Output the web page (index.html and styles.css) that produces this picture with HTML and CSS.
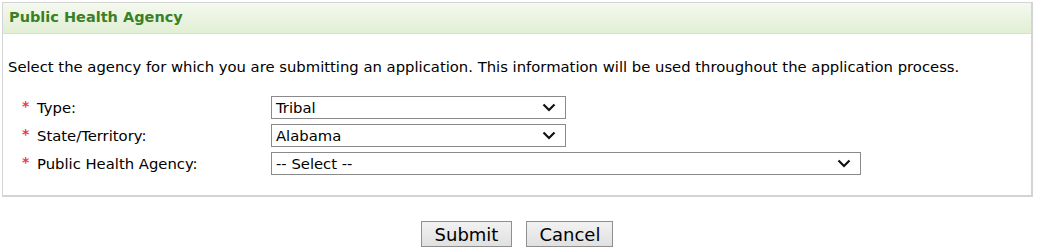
FILE: index.html
```html
<!DOCTYPE html>
<html>
<head>
<meta charset="utf-8">
<link rel="stylesheet" href="styles.css">
</head>
<body>
<div class="panel">
  <div class="panel-head">Public Health Agency</div>
  <div class="panel-body">
    <p class="intro">Select the agency for which you are submitting an application. This information will be used throughout the application process.</p>
    <div class="form">
      <div class="row">
        <label class="lbl"><span class="req">*</span>Type:</label>
        <div class="sel narrow"><span>Tribal</span><svg viewBox="0 0 14 9" width="14" height="9"><path d="M1.5 1.5 L7 7 L12.5 1.5" fill="none" stroke="#111" stroke-width="2.2"/></svg></div>
      </div>
      <div class="row">
        <label class="lbl"><span class="req">*</span>State/Territory:</label>
        <div class="sel narrow"><span>Alabama</span><svg viewBox="0 0 14 9" width="14" height="9"><path d="M1.5 1.5 L7 7 L12.5 1.5" fill="none" stroke="#111" stroke-width="2.2"/></svg></div>
      </div>
      <div class="row">
        <label class="lbl"><span class="req">*</span>Public Health Agency:</label>
        <div class="sel wide"><span>-- Select --</span><svg viewBox="0 0 14 9" width="14" height="9"><path d="M1.5 1.5 L7 7 L12.5 1.5" fill="none" stroke="#111" stroke-width="2.2"/></svg></div>
      </div>
    </div>
  </div>
</div>
<div class="actions">
  <button class="btn">Submit</button>
  <button class="btn">Cancel</button>
</div>
</body>
</html>
```
FILE: styles.css
```css
html, body { margin: 0; padding: 0; background: #fff; }
body { font-family: "DejaVu Sans", Verdana, sans-serif; color: #000; padding: 2px 0 0 2px; }
.panel { width: 1031px; border: 2px solid #d4d4d4; border-top-width: 1px; border-left-width: 1px; box-sizing: border-box; height: 195px; }
.panel-head { height: 31px; box-sizing: border-box; padding: 6px 6px 0 6px; font-size: 14.5px; font-weight: bold; color: #3a8026; background: linear-gradient(#f4f9ef, #e1efd4); border-bottom: 1px solid #d2e6c2; }
.panel-body { padding: 0 5px; }
.intro { margin: 24px 0 0 0; font-size: 14.8px; line-height: 18px; }
.form { margin-top: 20px; display: flex; flex-direction: column; gap: 5px; padding-left: 14px; }
.row { display: flex; align-items: center; height: 23px; }
.lbl { width: 249px; font-size: 14.8px; display: flex; align-items: center; }
.req { color: #e5404a; font-size: 14px; width: 15px; margin-top: -4px; font-weight: bold; }
.sel { height: 23px; box-sizing: border-box; border: 1px solid #8a8a8a; display: flex; align-items: center; justify-content: space-between; padding: 0 9px 0 4px; font-size: 14.8px; }
.narrow { width: 295px; }
.wide { width: 590px; }
.actions { display: flex; justify-content: center; gap: 14px; margin-top: 24px; padding-right: 5px; }
.btn { font-family: "DejaVu Sans", Verdana, sans-serif; font-size: 18px; height: 26px; padding: 0 13px; border: 1px solid #8f8f8f; background: linear-gradient(#f2f2f2, #e0e0e0); color: #000; }
.btn + .btn { padding: 0 12px; }
```
